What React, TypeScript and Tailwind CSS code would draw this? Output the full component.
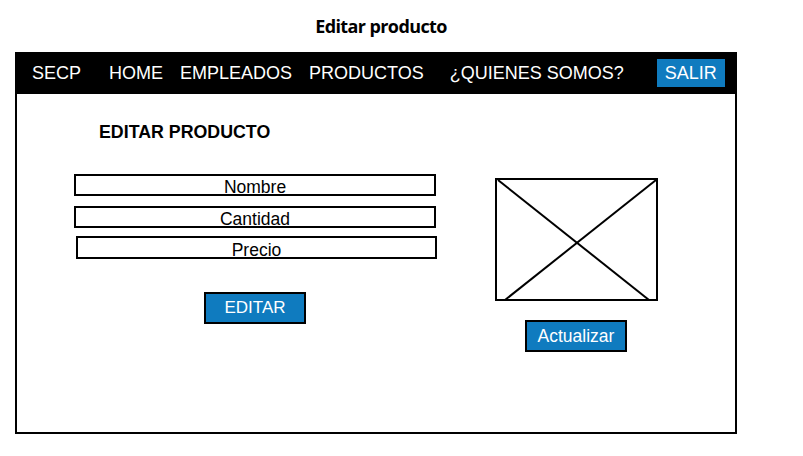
import React from "react";

export default function App() {
  const f = { fontFamily: '"Liberation Sans", Arial, sans-serif' };
  return (
    <div className="w-[803px] h-[456px] bg-white relative" style={f}>
      <div className="h-[52px] flex justify-center pt-[13px]">
        <div
          className="text-[18px] font-bold text-black leading-[26px] ml-[-41px]"
          style={{ fontFamily: '"Open Sans", sans-serif', letterSpacing: "-0.6px" }}
        >
          Editar producto
        </div>
      </div>
      <div className="ml-[15px] w-[722px] h-[382px] border-2 border-black flex flex-col">
        <div className="h-[40px] bg-black flex items-center text-white text-[18px] leading-[20px] pb-[2px]">
          <span className="ml-[15px]">SECP</span>
          <span className="ml-[28px]">HOME</span>
          <span className="ml-[17px]">EMPLEADOS</span>
          <span className="ml-[17px]">PRODUCTOS</span>
          <span className="ml-[26px]">¿QUIENES SOMOS?</span>
          <span className="ml-[33px] h-[28px] w-[68px] bg-[#0f7bbf] flex items-center justify-center">SALIR</span>
        </div>
        <div className="flex">
          <div className="ml-[57px] w-[362px] flex flex-col">
            <div className="mt-[28px] pl-[25px] text-[17.8px] font-bold leading-[20px] text-black">
              EDITAR PRODUCTO
            </div>
            <div className="mt-[32px] h-[22px] w-[362px] border-2 border-black flex items-center justify-center text-[17.5px] leading-[18px] pt-[3px]">
              Nombre
            </div>
            <div className="mt-[10px] h-[22px] w-[362px] border-2 border-black flex items-center justify-center text-[17.5px] leading-[18px] pt-[3px]">
              Cantidad
            </div>
            <div className="mt-[8px] ml-[2px] h-[23px] w-[361px] border-2 border-black flex items-center justify-center text-[17.5px] leading-[18px] pt-[5px]">
              Precio
            </div>
            <div className="mt-[33px] ml-[130px] h-[32px] w-[102px] border-2 border-black bg-[#0f7bbf] text-white flex items-center justify-center text-[17px] leading-[20px]">
              EDITAR
            </div>
          </div>
          <div className="ml-[59px] flex flex-col items-start">
            <svg className="mt-[84px]" width="163" height="123" viewBox="0 0 163 123">
              <rect x="1" y="1" width="161" height="121" fill="white" stroke="black" strokeWidth="2" />
              <line x1="3" y1="2" x2="154" y2="122" stroke="black" strokeWidth="2" />
              <line x1="161" y1="2" x2="10" y2="122" stroke="black" strokeWidth="2" />
            </svg>
            <div className="mt-[19px] ml-[30px] h-[32px] w-[102px] border-2 border-black bg-[#0f7bbf] text-white flex items-center justify-center text-[17.5px] leading-[20px]">
              Actualizar
            </div>
          </div>
        </div>
      </div>
    </div>
  );
}
